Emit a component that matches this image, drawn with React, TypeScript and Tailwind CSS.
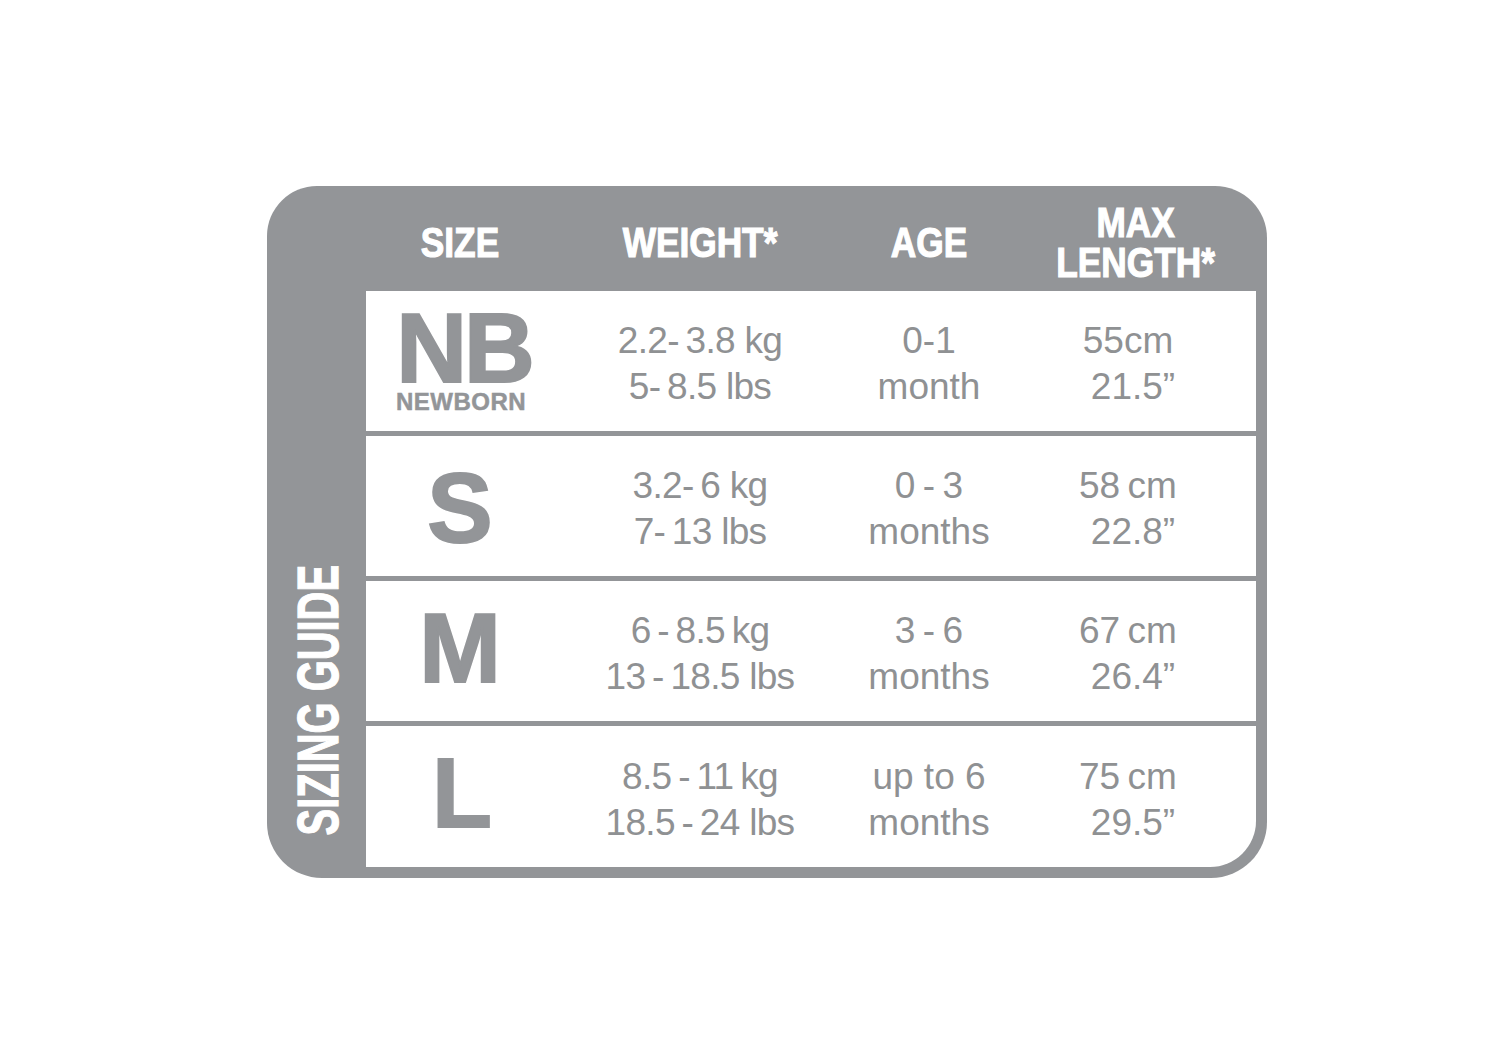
import React from "react";

const T = "\u2009";

type Row = {
  size: React.ReactNode;
  weight: [string, string];
  age: [string, string];
  len: [string, string];
  last?: boolean;
};

const big =
  "text-[98px] leading-none font-bold text-[#939598] [-webkit-text-stroke:2px_#939598]";

const rows: Row[] = [
  {
    size: (
      <div className="flex flex-col items-center mt-[-2px]">
        <span className="text-[98px] leading-[84px] font-bold tracking-[-3px] text-[#939598] [-webkit-text-stroke:2px_#939598] ml-[8px]">
          NB
        </span>
        <span className="text-[24px] leading-[24px] font-bold tracking-[0.5px] text-[#939598] [-webkit-text-stroke:0.5px_#939598] ml-[2px]">
          NEWBORN
        </span>
      </div>
    ),
    weight: [`2.2-${T}3.8 kg`, `5-${T}8.5 lbs`],
    age: ["0-1", "month"],
    len: ["55cm", "21.5\u201D"],
  },
  {
    size: <span className={`${big} mt-[4px]`}>S</span>,
    weight: [`3.2-${T}6 kg`, `7-${T}13 lbs`],
    age: [`0${T}-${T}3`, "months"],
    len: [`58${T}cm`, "22.8\u201D"],
  },
  {
    size: <span className={`${big} mt-[-6px]`}>M</span>,
    weight: [`6${T}-${T}8.5${T}kg`, `13${T}-${T}18.5 lbs`],
    age: [`3${T}-${T}6`, "months"],
    len: [`67${T}cm`, "26.4\u201D"],
  },
  {
    size: <span className={`${big} mt-[-8px] ml-[4px]`}>L</span>,
    weight: [`8.5${T}-${T}11${T}kg`, `18.5${T}-${T}24 lbs`],
    age: ["up to 6", "months"],
    len: [`75${T}cm`, "29.5\u201D"],
    last: true,
  },
];

function Head({ children }: { children: React.ReactNode }) {
  return (
    <div className="flex flex-col items-center justify-center text-white font-bold text-[43px] leading-[40px] scale-x-[0.82] whitespace-nowrap [-webkit-text-stroke:1.2px_white]">
      {children}
    </div>
  );
}

export default function App() {
  return (
    <div className="w-[1500px] h-[1061px] bg-white font-['Liberation_Sans',Arial,sans-serif] overflow-hidden">
      <div className="ml-[267px] pt-[186px]">
        <div className="w-[1000px] h-[692px] bg-[#939598] rounded-tl-[50px] rounded-tr-[52px] rounded-bl-[55px] rounded-br-[56px] flex">
          {/* sidebar */}
          <div className="w-[99px] flex flex-col justify-end items-center pb-[43px]">
            <div className="h-[270px] w-[44px] flex items-center justify-center ml-[4px]">
              <span className="[writing-mode:vertical-rl] rotate-180 scale-y-[0.7] whitespace-nowrap leading-none text-white font-bold text-[57px] [-webkit-text-stroke:1.2px_white]">
                SIZING GUIDE
              </span>
            </div>
          </div>
          {/* main */}
          <div className="w-[890px] flex flex-col pb-[11px]">
            <div className="h-[105px] grid grid-cols-[188px_292px_166px_244px] items-center pt-[7px]">
              <Head>SIZE</Head>
              <Head>WEIGHT*</Head>
              <Head>AGE</Head>
              <Head>
                <span className="ml-[4px]">MAX</span>
                <span className="ml-[4px]">LENGTH*</span>
              </Head>
            </div>
            <div className="flex-1 flex flex-col gap-[5px]">
              {rows.map((r, i) => (
                <div
                  key={i}
                  className={
                    r.last
                      ? "flex-1 bg-white grid grid-cols-[188px_292px_166px_244px] items-center rounded-br-[46px]"
                      : "h-[140px] bg-white grid grid-cols-[188px_292px_166px_244px] items-center"
                  }
                >
                  <div className="flex justify-center items-center">{r.size}</div>
                  <div className="flex flex-col items-center text-[37px] leading-[46px] text-[#8f9193] tracking-[-0.7px] pt-[6px] whitespace-nowrap">
                    <span>{r.weight[0]}</span>
                    <span>{r.weight[1]}</span>
                  </div>
                  <div className="flex flex-col items-center text-[37px] leading-[46px] text-[#8f9193] pt-[6px] whitespace-nowrap">
                    <span>{r.age[0]}</span>
                    <span>{r.age[1]}</span>
                  </div>
                  <div className="flex flex-col items-center text-[37px] leading-[46px] text-[#8f9193] pt-[6px] whitespace-nowrap">
                    <span className="mr-[12px]">{r.len[0]}</span>
                    <span className="mr-[2px]">{r.len[1]}</span>
                  </div>
                </div>
              ))}
            </div>
          </div>
          <div className="w-[11px]" />
        </div>
      </div>
    </div>
  );
}
